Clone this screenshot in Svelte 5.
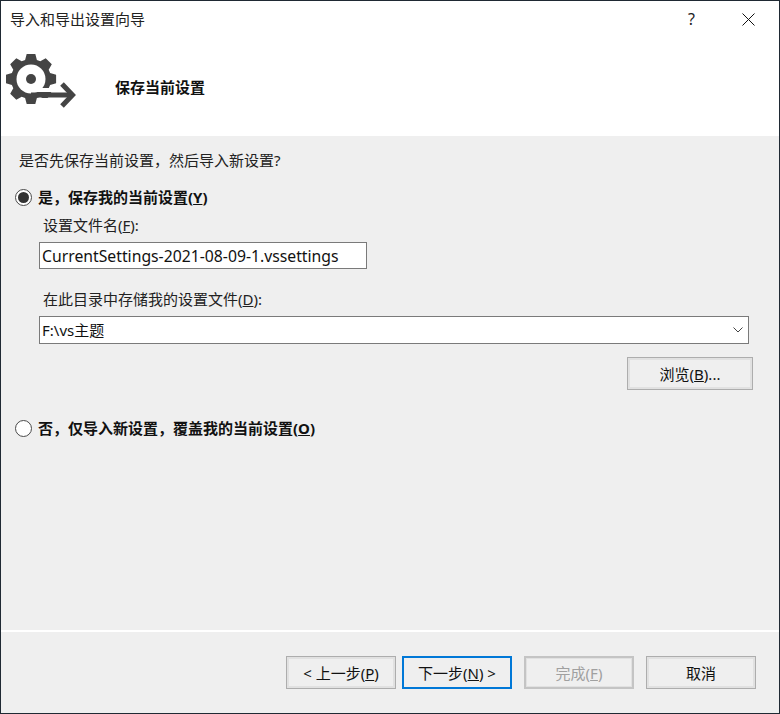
<script lang="ts">
  let saveCurrent = $state(true);
  let fileName = $state('CurrentSettings-2021-08-09-1.vssettings');

  // 8 tooth gear outline around (25, 25)
  const gearPath = (() => {
    const pts: string[] = [];
    for (let i = 0; i < 8; i++) {
      const a = (i * 45 - 90) * (Math.PI / 180);
      for (const [off, r] of [[-0.3, 20], [-0.17, 25.5], [0.17, 25.5], [0.3, 20]]) {
        pts.push(`${(25 + r * Math.cos(a + off)).toFixed(1)} ${(25 + r * Math.sin(a + off)).toFixed(1)}`);
      }
    }
    return `M${pts.join('L')}Z`;
  })();
</script>

<div class="window">
  <div class="header">
    <div class="titlebar">
      <span class="title">导入和导出设置向导</span>
      <span class="help">?</span>
      <svg class="close" width="13" height="13" viewBox="0 0 13 13">
        <path d="M0.5 0.5 L12.5 12.5 M12.5 0.5 L0.5 12.5" stroke="#111" fill="none" />
      </svg>
    </div>
    <div class="banner">
      <svg class="logo" width="72" height="62" viewBox="0 0 72 62">
        <path d={gearPath} fill="#444" />
        <circle cx="25" cy="25" r="14.500" fill="#fff" />
        <circle cx="25" cy="25" r="5" fill="#444" />
        <path d="M31 34 H72 V38 H31 Z M33 44 H72 V62 H33 Z" fill="#fff" />
        <path d="M25 41 H65" stroke="#444" stroke-width="5" fill="none" />
        <path d="M56 30 L66.500 41 L56 52" fill="none" stroke="#444" stroke-width="5" />
      </svg>
      <strong class="banner-title">保存当前设置</strong>
    </div>
  </div>

  <div class="body">
    <p class="question">是否先保存当前设置，然后导入新设置?</p>

    <label class="radio-row first">
      <input type="radio" bind:group={saveCurrent} value={true} />
      <span class="radio" class:checked={saveCurrent}></span>
      <b>是，保存我的当前设置(<u>Y</u>)</b>
    </label>

    <div class="save-options">
      <div class="field-label">设置文件名(<u>F</u>):</div>
      <input class="name-input" type="text" bind:value={fileName} />

      <div class="field-label dir-label">在此目录中存储我的设置文件(<u>D</u>):</div>
      <div class="combo">
        <span>F:\vs主题</span>
        <svg width="10" height="6" viewBox="0 0 10 6">
          <path d="M0.500 0.500 L5 5 L9.500 0.500" fill="none" stroke="#444" />
        </svg>
      </div>

      <div class="browse-row">
        <button class="btn browse">浏览(<u>B</u>)...</button>
      </div>
    </div>

    <label class="radio-row second">
      <input type="radio" bind:group={saveCurrent} value={false} />
      <span class="radio" class:checked={!saveCurrent}></span>
      <b>否，仅导入新设置，覆盖我的当前设置(<u>O</u>)</b>
    </label>
  </div>

  <div class="footer">
    <button class="btn">&lt; 上一步(<u>P</u>)</button>
    <button class="btn primary">下一步(<u>N</u>) &gt;</button>
    <button class="btn disabled">完成(<u>F</u>)</button>
    <button class="btn">取消</button>
  </div>
</div>

<style>
  :global(body) {
    margin: 0;
    background: #efefef;
  }

  .window {
    box-sizing: border-box;
    width: 780px;
    height: 714px;
    display: flex;
    flex-direction: column;
    border: 1px solid #1f2933;
    background: #efefef;
    color: #111;
    font-family: "Noto Sans", "Noto Sans CJK SC", sans-serif;
    font-size: 15px;
    line-height: 20px;
  }

  .header {
    height: 135px;
    background: #fff;
    flex: none;
  }

  .titlebar {
    display: flex;
    align-items: center;
    height: 36px;
    padding: 0 24px 0 9px;
  }

  .title {
    flex: 1;
    color: #222;
  }

  .help {
    margin-right: 47px;
    font-size: 16px;
    color: #222;
  }

  .banner {
    display: flex;
    align-items: flex-start;
    padding: 17px 0 0 5px;
  }

  .logo {
    flex: none;
  }

  .banner-title {
    margin: 23px 0 0 37px;
    font-weight: 700;
  }

  .body {
    flex: 1;
    padding: 14px 30px 0 14px;
  }

  .question {
    margin: 0;
    padding-left: 4px;
    color: #222;
  }

  .radio-row {
    display: flex;
    align-items: center;
    gap: 6px;
  }

  .radio-row input {
    display: none;
  }

  .radio-row.first {
    margin-top: 17px;
  }

  .radio-row.second {
    margin-top: 28px;
  }

  .radio {
    box-sizing: border-box;
    width: 17px;
    height: 17px;
    flex: none;
    display: flex;
    align-items: center;
    justify-content: center;
    border: 1px solid #4a4a4a;
    border-radius: 50%;
    background: #fff;
  }

  .radio.checked::after {
    content: "";
    width: 11px;
    height: 11px;
    border-radius: 50%;
    background: #333;
  }

  .save-options {
    padding-left: 24px;
  }

  .field-label {
    margin-top: 8px;
    padding-left: 4px;
    color: #222;
  }

  .dir-label {
    margin-top: 20px;
  }

  .name-input {
    box-sizing: border-box;
    display: block;
    width: 328px;
    height: 27px;
    margin-top: 7px;
    padding: 0 2px;
    border: 1px solid #7a7a7a;
    border-radius: 0;
    background: #fff;
    color: #111;
    font: inherit;
    font-size: 15.750px;
    outline: none;
  }

  .combo {
    box-sizing: border-box;
    display: flex;
    align-items: center;
    justify-content: space-between;
    height: 28px;
    margin-top: 7px;
    padding: 0 5px 0 2px;
    border: 1px solid #7a7a7a;
    background: #fff;
  }

  .browse-row {
    display: flex;
    justify-content: flex-end;
    margin: 13px -4px 0 0;
  }

  .btn {
    box-sizing: border-box;
    width: 110px;
    height: 33px;
    padding: 0;
    border: 1px solid #adadad;
    box-shadow: inset 0 0 0 2px #e1e1e1;
    background: #efefef;
    color: #111;
    font: inherit;
  }

  .browse {
    width: 126px;
  }

  .primary {
    border: 2px solid #0078d7;
    box-shadow: none;
  }

  .disabled {
    border: 2px solid #c4c4c4;
    box-shadow: inset 0 0 0 1px #e1e1e1;
    color: #a0a0a0;
  }

  .footer {
    box-sizing: border-box;
    flex: none;
    height: 83px;
    display: flex;
    align-items: flex-start;
    gap: 12px;
    padding: 24px 0 0 285px;
    border-top: 2px solid #fff;
  }

  .footer .btn:first-child {
    margin-right: -6px;
  }
</style>
